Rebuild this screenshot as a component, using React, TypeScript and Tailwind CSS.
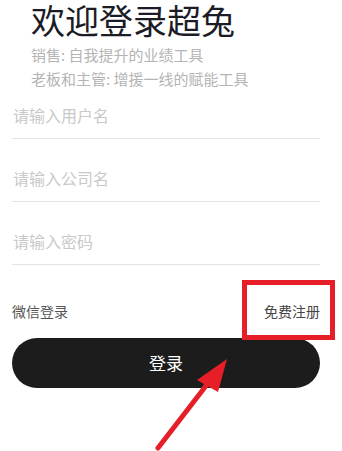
export default function App() {
  return (
    <div
      className="relative h-[451px] w-[342px] overflow-hidden bg-white"
      style={{ fontFamily: '"Noto Sans CJK SC", "Noto Sans", sans-serif' }}
    >
      {/* 标题 */}
      <div className="pl-[31px]">
        <h1 className="text-[34px] leading-[40px] text-[#1c1c26]">欢迎登录超兔</h1>
        <div className="mt-[3px] text-[15px] leading-[24px] text-[#b4b4b4]">
          <p>销售: 自我提升的业绩工具</p>
          <p>老板和主管: 增援一线的赋能工具</p>
        </div>
      </div>

      {/* 表单 */}
      <div className="ml-3 flex w-[308px] flex-col">
        <div className="flex flex-col gap-[15px]">
          {["请输入用户名", "请输入公司名", "请输入密码"].map((p) => (
            <input
              key={p}
              type={p === "请输入密码" ? "password" : "text"}
              placeholder={p}
              className="h-[48px] border-b border-[#e3e3e3] pl-[1px] text-[16px] outline-none placeholder:text-[#c9c9c9]"
            />
          ))}
        </div>

        <div className="mt-[31px] flex h-[30px] items-center justify-between text-[14px]">
          <span className="text-[#555]">微信登录</span>
          <span className="text-[#444]">免费注册</span>
        </div>

        <button className="mt-[12px] h-[50px] w-full rounded-full bg-[#1c1c1c] text-[17px] text-white">
          登录
        </button>
      </div>

      {/* 标注 */}
      <div className="absolute left-[242px] top-[280px] h-[60px] w-[93px] border-[5px] border-[#e61e28]" />
      <svg className="absolute left-0 top-0" width="342" height="451" viewBox="0 0 342 451">
        <line x1="158" y1="448" x2="212" y2="378" stroke="#e61e28" strokeWidth="5" strokeLinecap="round" />
        <polygon points="227,359 197,380 218,392" fill="#e61e28" />
      </svg>
    </div>
  );
}
